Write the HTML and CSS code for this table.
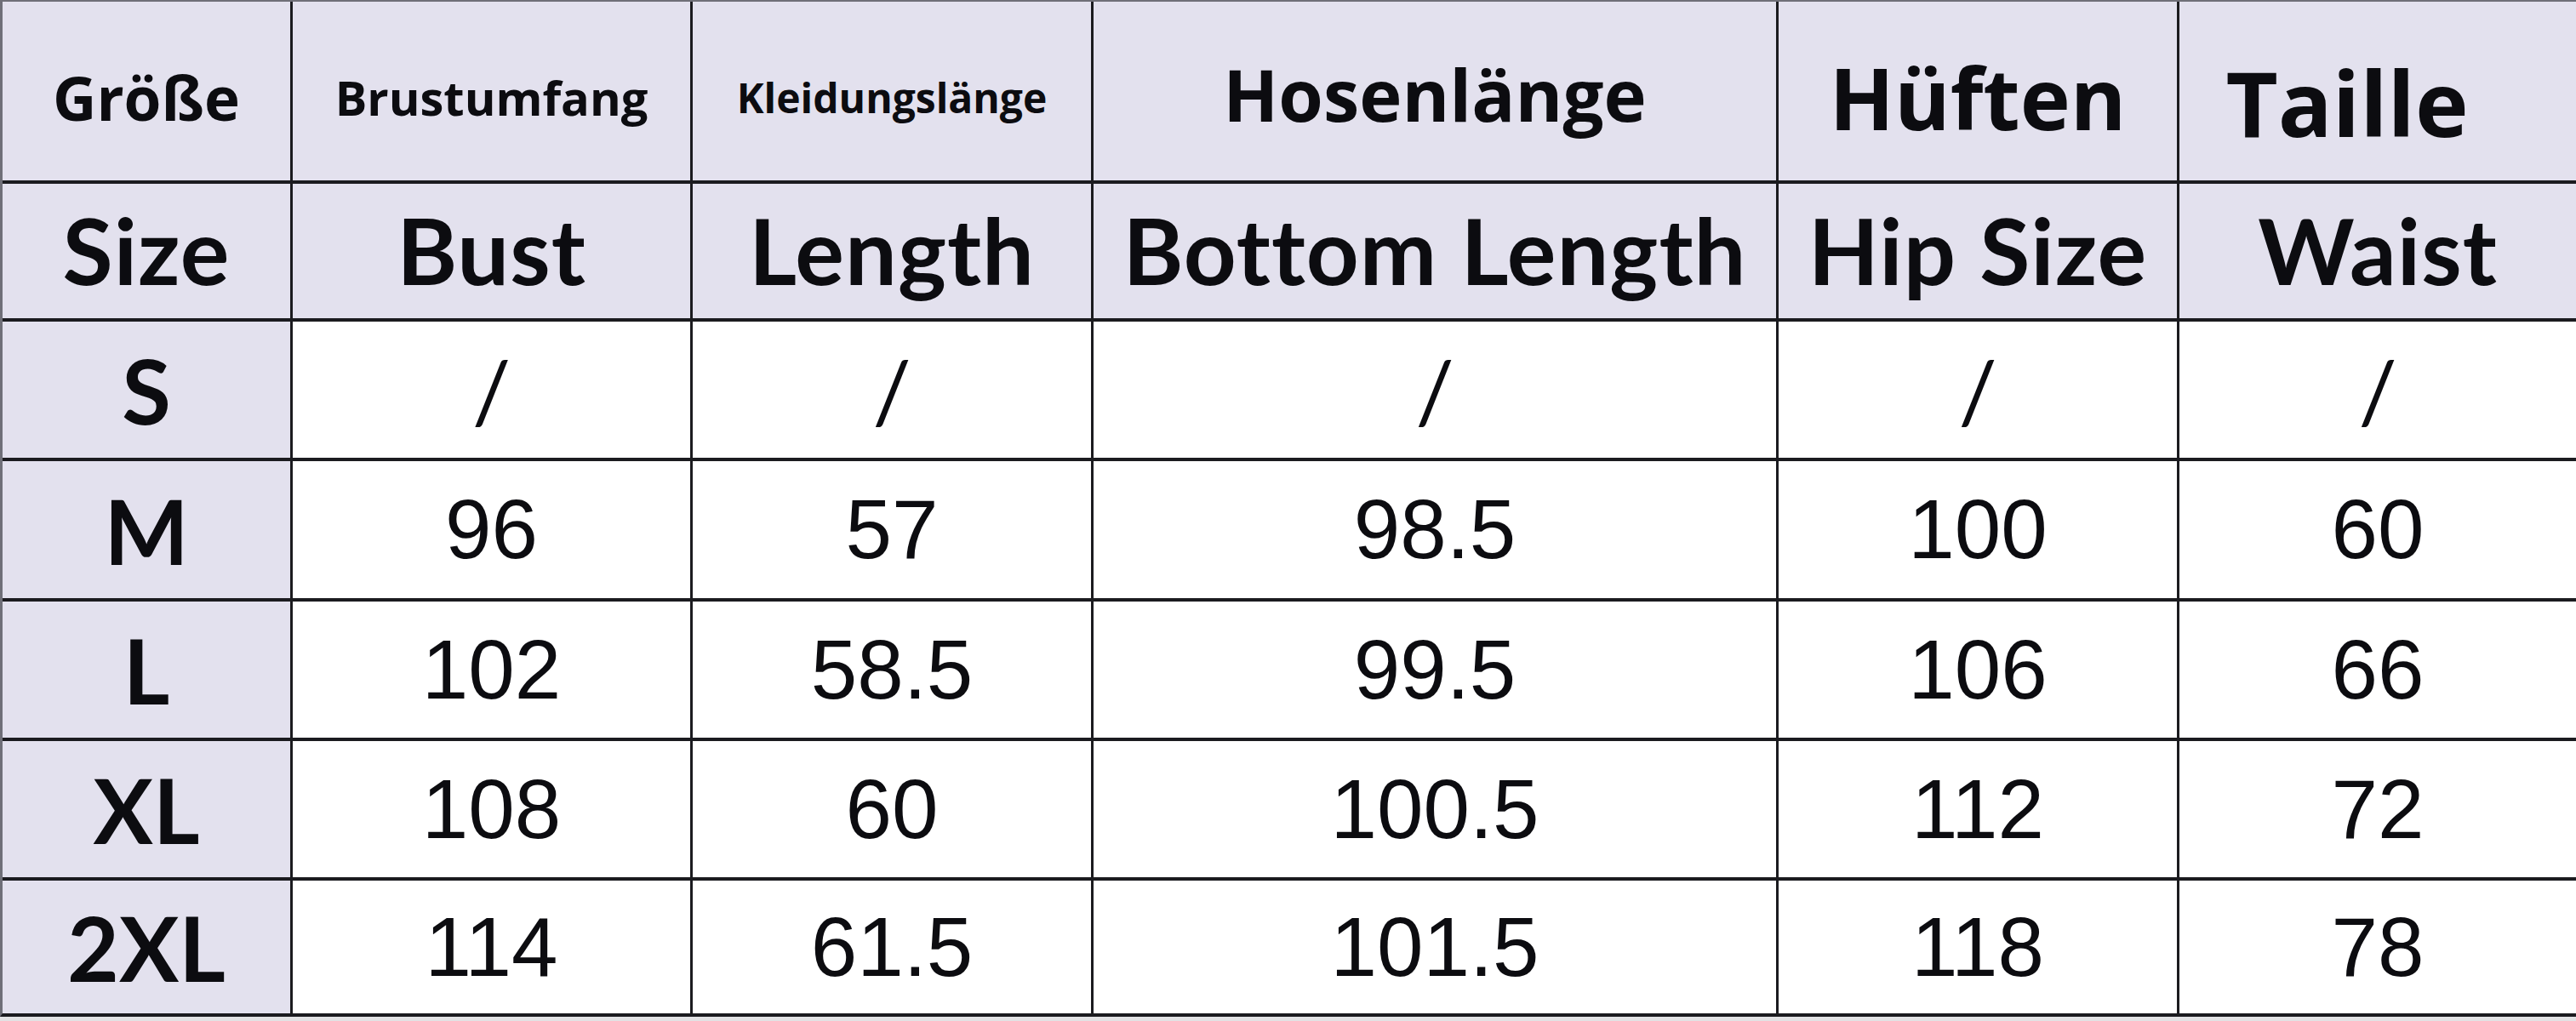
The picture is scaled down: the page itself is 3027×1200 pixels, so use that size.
FILE: index.html
```html
<!DOCTYPE html>
<html lang="de">
<head>
<meta charset="utf-8">
<title>Größentabelle</title>
<link rel="stylesheet" href="styles.css">
</head>
<body>
<div class="sheet">
  <div class="table">
    <div class="cell head de"><span class="t-groesse">Größe</span></div>
    <div class="cell head de"><span class="t-brust">Brustumfang</span></div>
    <div class="cell head de"><span class="t-kleid">Kleidungslänge</span></div>
    <div class="cell head de"><span class="t-hose">Hosenlänge</span></div>
    <div class="cell head de"><span class="t-huefte">Hüften</span></div>
    <div class="cell head de taille-cell"><span class="t-taille">Taille</span></div>

    <div class="cell head en">Size</div>
    <div class="cell head en">Bust</div>
    <div class="cell head en">Length</div>
    <div class="cell head en">Bottom Length</div>
    <div class="cell head en">Hip Size</div>
    <div class="cell head en">Waist</div>

    <div class="cell size">S</div>
    <div class="cell val slash">/</div>
    <div class="cell val slash">/</div>
    <div class="cell val slash">/</div>
    <div class="cell val slash">/</div>
    <div class="cell val slash">/</div>

    <div class="cell size">M</div>
    <div class="cell val">96</div>
    <div class="cell val">57</div>
    <div class="cell val">98.5</div>
    <div class="cell val">100</div>
    <div class="cell val">60</div>

    <div class="cell size">L</div>
    <div class="cell val">102</div>
    <div class="cell val">58.5</div>
    <div class="cell val">99.5</div>
    <div class="cell val">106</div>
    <div class="cell val">66</div>

    <div class="cell size">XL</div>
    <div class="cell val">108</div>
    <div class="cell val">60</div>
    <div class="cell val">100.5</div>
    <div class="cell val">112</div>
    <div class="cell val">72</div>

    <div class="cell size">2XL</div>
    <div class="cell val">114</div>
    <div class="cell val">61.5</div>
    <div class="cell val">101.5</div>
    <div class="cell val">118</div>
    <div class="cell val">78</div>
  </div>
</div>
</body>
</html>
```

FILE: styles.css
```css
html, body {
  margin: 0;
  padding: 0;
  background: #e2e2e4;
}

.sheet {
  width: 3027px;
  height: 1200px;
  overflow: hidden;
}

.table {
  display: grid;
  grid-template-columns: 338px 467px 468px 802px 468px 1fr;
  grid-template-rows: 210px 158px 160px 161px 160px 160px 156px;
  column-gap: 3px;
  row-gap: 4px;
  background: #1b1b1f;
  border-top: 2px solid #6f6f78;
  border-left: 3px solid #6f6f78;
  border-bottom: 4px solid #1b1b1f;
}

.cell {
  display: flex;
  align-items: center;
  justify-content: center;
  color: #0c0c10;
  white-space: nowrap;
  overflow: hidden;
}

.head, .size {
  background: #e3e1ee;
}

.val {
  background: #ffffff;
  font-family: "Liberation Sans", Arial, sans-serif;
  font-size: 98px;
  font-weight: 400;
}

.de {
  font-family: "Open Sans", "Noto Sans", sans-serif;
  font-weight: 700;
  padding-top: 14px;
}

.t-groesse { font-size: 71px; }
.t-brust { font-size: 56px; }
.t-kleid { font-size: 48px; }
.t-hose { font-size: 85px; }
.t-huefte { font-size: 100px; }
.t-taille { font-size: 106px; }

.t-hose { margin-top: -8px; }

.taille-cell {
  padding-top: 26px;
  padding-right: 72px;
}

.en {
  font-family: Lato, "Open Sans", sans-serif;
  font-weight: 700;
  font-size: 108px;
  letter-spacing: 1px;
  padding-bottom: 4px;
}

.size {
  font-family: Lato, "Open Sans", sans-serif;
  font-weight: 700;
  font-size: 105px;
}

.slash {
  font-family: Lato, sans-serif;
  font-size: 100px;
}
```
